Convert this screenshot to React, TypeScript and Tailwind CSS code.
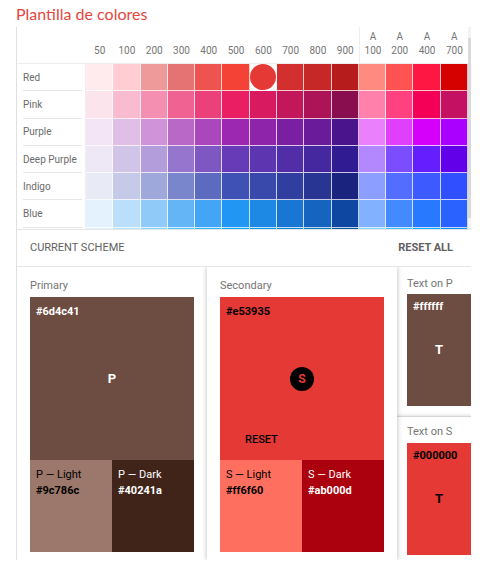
import React from 'react'

const COLS = ['50', '100', '200', '300', '400', '500', '600', '700', '800', '900', 'A100', 'A200', 'A400', 'A700']

const PALETTE: { name: string; colors: string[] }[] = [
  { name: 'Red', colors: ['#ffebee', '#ffcdd2', '#ef9a9a', '#e57373', '#ef5350', '#f44336', '#e53935', '#d32f2f', '#c62828', '#b71c1c', '#ff8a80', '#ff5252', '#ff1744', '#d50000'] },
  { name: 'Pink', colors: ['#fce4ec', '#f8bbd0', '#f48fb1', '#f06292', '#ec407a', '#e91e63', '#d81b60', '#c2185b', '#ad1457', '#880e4f', '#ff80ab', '#ff4081', '#f50057', '#c51162'] },
  { name: 'Purple', colors: ['#f3e5f5', '#e1bee7', '#ce93d8', '#ba68c8', '#ab47bc', '#9c27b0', '#8e24aa', '#7b1fa2', '#6a1b9a', '#4a148c', '#ea80fc', '#e040fb', '#d500f9', '#aa00ff'] },
  { name: 'Deep Purple', colors: ['#ede7f6', '#d1c4e9', '#b39ddb', '#9575cd', '#7e57c2', '#673ab7', '#5e35b1', '#512da8', '#4527a0', '#311b92', '#b388ff', '#7c4dff', '#651fff', '#6200ea'] },
  { name: 'Indigo', colors: ['#e8eaf6', '#c5cae9', '#9fa8da', '#7986cb', '#5c6bc0', '#3f51b5', '#3949ab', '#303f9f', '#283593', '#1a237e', '#8c9eff', '#536dfe', '#3d5afe', '#304ffe'] },
  { name: 'Blue', colors: ['#e3f2fd', '#bbdefb', '#90caf9', '#64b5f6', '#42a5f5', '#2196f3', '#1e88e5', '#1976d2', '#1565c0', '#0d47a1', '#82b1ff', '#448aff', '#2979ff', '#2962ff'] },
  // only the top edge of this row shows above the fold
  { name: '', colors: ['#e1f5fe', '#b3e5fc', '#81d4fa', '#4fc3f7', '#29b6f6', '#03a9f4', '#039be5', '#0288d1', '#0277bd', '#01579b', '#80d8ff', '#40c4ff', '#00b0ff', '#0091ea'] },
]

function SchemeCard({
  label,
  hex,
  main,
  mainText,
  letter,
  letterStyle,
  light,
  dark,
  prefix,
  elevated,
  showReset,
}: {
  label: string
  hex: string
  main: string
  mainText: string
  letter: React.ReactNode
  letterStyle?: string
  light: { hex: string; text: string }
  dark: { hex: string; text: string }
  prefix: string
  elevated?: boolean
  showReset?: boolean
}) {
  return (
    <div
      className={`w-[190px] shrink-0 bg-white pl-[13px] pt-[12px] ${
        elevated ? 'relative z-10 shadow-[0_0_5px_rgba(0,0,0,0.28)]' : ''
      }`}
    >
      <div className="h-[13px] text-[11px] leading-[13px] text-[#757575]">{label}</div>
      <div className="mt-[5px] w-[164px]">
        <div className="relative flex h-[163px] flex-col" style={{ backgroundColor: main }}>
          <div className="pl-[6px] pt-[8px] text-[11px] font-bold leading-[14px]" style={{ color: mainText }}>
            {hex}
          </div>
          <div className="absolute inset-0 flex items-center justify-center">
            <span className={letterStyle}>{letter}</span>
          </div>
          {showReset && (
            <div className="mt-auto pb-[13px] pl-[25px] text-[11px] font-medium leading-[14px] text-black">RESET</div>
          )}
        </div>
        <div className="flex h-[92px]">
          <div className="flex-1 pl-[6px] pt-[8px]" style={{ backgroundColor: light.hex, color: light.text }}>
            <div className="text-[11px] leading-[14px]">{prefix} — Light</div>
            <div className="mt-[2px] text-[11px] font-bold leading-[14px]">{light.hex}</div>
          </div>
          <div className="flex-1 pl-[6px] pt-[8px]" style={{ backgroundColor: dark.hex, color: dark.text }}>
            <div className="text-[11px] leading-[14px]">{prefix} — Dark</div>
            <div className="mt-[2px] text-[11px] font-bold leading-[14px]">{dark.hex}</div>
          </div>
        </div>
      </div>
    </div>
  )
}

function TextCard({ label, bg, hex, color, first }: { label: string; bg: string; hex: string; color: string; first?: boolean }) {
  return (
    <div className={`pl-[10px] ${first ? 'pt-[10px] pb-[10px]' : 'border-t border-[#d6d6d6] pt-[8px] shadow-[0_-1px_3px_rgba(0,0,0,0.12)]'}`}>
      <div className="h-[13px] text-[11px] leading-[13px] text-[#757575]">{label}</div>
      <div className={`${first ? 'mt-[4px]' : 'mt-[5px]'} relative h-[112px] w-[64px]`} style={{ backgroundColor: bg }}>
        <div className="pl-[6px] pt-[6px] text-[11px] font-bold leading-[14px]" style={{ color }}>
          {hex}
        </div>
        <div className="absolute inset-0 flex items-center justify-center text-[13px] font-bold" style={{ color }}>
          T
        </div>
      </div>
    </div>
  )
}

export default function App() {
  return (
    <div className="h-[586px] w-[498px] overflow-hidden bg-white font-['Roboto',sans-serif]">
      {/* Title */}
      <div className="h-[27px] pl-4 pt-[4px] font-['Lato',sans-serif] text-[16px] leading-[20px] text-[#e5463d]">
        Plantilla de colores
      </div>

      {/* Panel */}
      <div className="ml-4 w-[455px] border-l border-[#e0e0e0]">
        {/* Palette grid */}
        <div className="flex h-[202px] overflow-hidden">
          <div className="w-[451px]">
            <div className="grid grid-cols-[69px_repeat(14,1fr)] border-b border-[#eeeeee]">
              <div className="h-[36px]" />
              {COLS.map((c, i) => (
                <div
                  key={c}
                  className={`flex h-[36px] flex-col items-center justify-end pb-[5px] text-[10px] leading-[14px] text-[#757575] ${
                    i === 10 ? 'border-l border-[#eeeeee]' : ''
                  }`}
                >
                  {c.startsWith('A') ? (
                    <>
                      <span>A</span>
                      <span>{c.slice(1)}</span>
                    </>
                  ) : (
                    <span>{c}</span>
                  )}
                </div>
              ))}
            </div>
            {PALETTE.map((row, r) => (
              <div key={r} className="grid h-[27.3px] grid-cols-[69px_repeat(14,1fr)]">
                <div className="border-r border-[#eeeeee] pl-[6px] pr-[3px]">
                  <div className="flex h-full items-center border-b border-[#e6e6e6] text-[10px] text-[#6b6b6b]">
                    {row.name}
                  </div>
                </div>
                {row.colors.map((col, i) =>
                  r === 0 && i === 6 ? (
                    <div key={i} className="flex items-center justify-center border-b border-r border-white bg-white">
                      <div className="h-[26px] w-[26px] rounded-full" style={{ backgroundColor: col }} />
                    </div>
                  ) : (
                    <div
                      key={i}
                      className="border-b border-r border-white/75"
                      style={{ backgroundColor: col }}
                    />
                  )
                )}
              </div>
            ))}
          </div>
          {/* scrollbar */}
          <div className="flex w-[3px] flex-col bg-[#f3f3f3]">
            <div className="mt-[11px] h-[180px] bg-[#d9d9d9]" />
          </div>
        </div>

        {/* Current scheme bar */}
        <div className="flex h-[38px] items-center justify-between border-t border-b border-[#e6e6e6] pl-[13px] pr-[18px] text-[11px] text-[#616161]">
          <span>CURRENT SCHEME</span>
          <span className="font-bold">RESET ALL</span>
        </div>

        {/* Scheme cards */}
        <div className="flex h-[293px] overflow-hidden">
          <SchemeCard
            label="Primary"
            hex="#6d4c41"
            main="#6d4c41"
            mainText="#ffffff"
            letter="P"
            letterStyle="text-[13px] font-bold text-white"
            light={{ hex: '#9c786c', text: '#000000' }}
            dark={{ hex: '#40241a', text: '#ffffff' }}
            prefix="P"
          />
          <SchemeCard
            label="Secondary"
            hex="#e53935"
            main="#e53935"
            mainText="#000000"
            letter={
              <span className="flex h-[24px] w-[24px] items-center justify-center rounded-full bg-black text-[12px] font-bold text-[#e53935]">
                S
              </span>
            }
            light={{ hex: '#ff6f60', text: '#000000' }}
            dark={{ hex: '#ab000d', text: '#ffffff' }}
            prefix="S"
            elevated
            showReset
          />
          <div className="w-[74px] shrink-0">
            <TextCard label="Text on P" bg="#6d4c41" hex="#ffffff" color="#ffffff" first />
            <TextCard label="Text on S" bg="#e53935" hex="#000000" color="#000000" />
          </div>
        </div>
      </div>
    </div>
  )
}
